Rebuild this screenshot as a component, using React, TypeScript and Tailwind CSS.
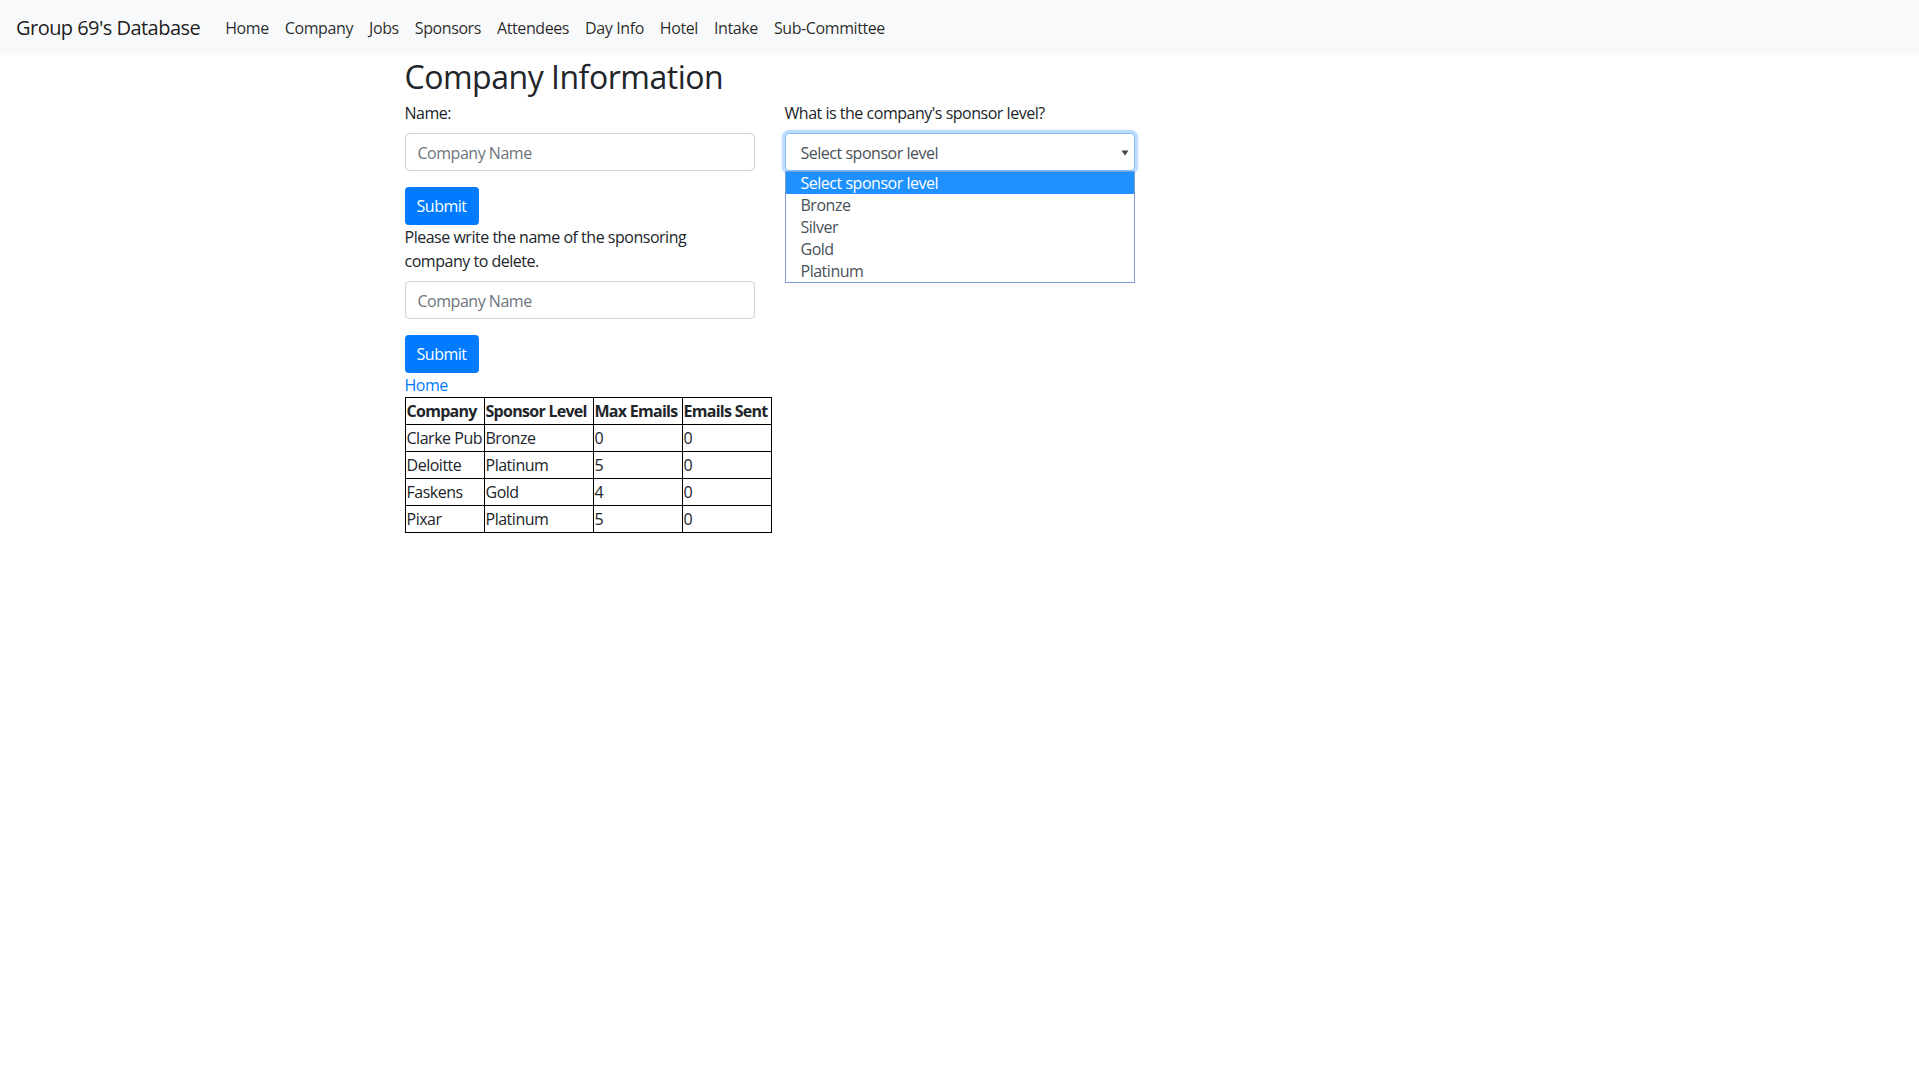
import React from 'react'

const navLinks = ['Home', 'Company', 'Jobs', 'Sponsors', 'Attendees', 'Day Info', 'Hotel', 'Intake', 'Sub-Committee']

const levels = ['Select sponsor level', 'Bronze', 'Silver', 'Gold', 'Platinum']

const companies = [
  { name: 'Clarke Pub', level: 'Bronze', max: 0, sent: 0 },
  { name: 'Deloitte', level: 'Platinum', max: 5, sent: 0 },
  { name: 'Faskens', level: 'Gold', max: 4, sent: 0 },
  { name: 'Pixar', level: 'Platinum', max: 5, sent: 0 },
]

function TextInput() {
  return (
    <input
      type="text"
      placeholder="Company Name"
      className="block h-[38px] w-full rounded-[4px] border border-[#ced4da] bg-white px-3 pt-px text-[16px] text-[#495057] outline-none placeholder:text-[#6c757d]"
    />
  )
}

function SubmitButton() {
  return (
    <button className="h-[38px] rounded-[4px] bg-[#007bff] px-3 text-[16px] text-white">
      Submit
    </button>
  )
}

export default function App() {
  return (
    <div className="min-h-screen bg-white font-['Open_Sans',sans-serif] text-[16px] leading-6 tracking-[-0.03em] text-[#212529]">
      {/* navbar */}
      <nav className="flex h-[55px] items-center bg-[#f8f9fa] px-4">
        <span className="mr-[17px] text-[20px] font-medium tracking-[-0.027em] text-black/90">Group 69's Database</span>
        <div className="flex tracking-[-0.025em]">
          {navLinks.map((l) => (
            <a key={l} href="#" className="px-2 text-black/85">
              {l}
            </a>
          ))}
        </div>
      </nav>

      <div className="mx-auto w-[1140px] px-[15px]">
        <h2 className="mt-[3px] mb-[5px] text-[32px] leading-[1.2] font-medium">Company Information</h2>

        <div className="grid grid-cols-3 gap-x-[30px]">
          {/* add / delete */}
          <div>
            <label className="mb-2 block">Name:</label>
            <div className="mb-4">
              <TextInput />
            </div>
            <SubmitButton />
            <label className="mb-2 block">
              Please write the name of the sponsoring
              <br />
              company to delete.
            </label>
            <div className="mb-4">
              <TextInput />
            </div>
            <SubmitButton />
          </div>

          {/* sponsor level */}
          <div>
            <label className="mb-2 block">What is the company's sponsor level?</label>
            <div className="relative">
              <div className="flex h-[38px] items-center justify-between rounded-[4px] border border-[#80bdff] bg-white pt-px pr-[5px] pl-[15px] text-[#495057] shadow-[0_0_0_0.2rem_rgba(0,123,255,0.25)]">
                <span>Select sponsor level</span>
                <svg width="8" height="6" viewBox="0 0 8 6">
                  <path d="M0.5 0.5 H7.5 L4 5.5 Z" fill="#444" />
                </svg>
              </div>
              <ul className="absolute top-[38px] right-0 left-0 z-10 border border-[#7a9cd3] bg-white">
                {levels.map((lv, i) => (
                  <li
                    key={lv}
                    className={
                      i === 0
                        ? 'h-[22px] bg-[#1e90ff] pl-[15px] leading-[22px] text-white'
                        : 'h-[22px] pl-[15px] leading-[22px] text-[#495057]'
                    }
                  >
                    {lv}
                  </li>
                ))}
              </ul>
            </div>
          </div>
        </div>

        <a href="#" className="block text-[#007bff]">
          Home
        </a>

        <table className="border-collapse border border-black">
          <thead>
            <tr>
              <th className="w-[79px] border border-black p-px text-left tracking-[-0.045em] whitespace-nowrap">Company</th>
              <th className="w-[109px] border border-black p-px text-left tracking-[-0.045em] whitespace-nowrap">Sponsor Level</th>
              <th className="w-[89px] border border-black p-px text-left tracking-[-0.045em] whitespace-nowrap">Max Emails</th>
              <th className="w-[89px] border border-black p-px text-left tracking-[-0.045em] whitespace-nowrap">Emails Sent</th>
            </tr>
          </thead>
          <tbody>
            {companies.map((c) => (
              <tr key={c.name}>
                <td className="border border-black p-px whitespace-nowrap">{c.name}</td>
                <td className="border border-black p-px whitespace-nowrap">{c.level}</td>
                <td className="border border-black p-px">{c.max}</td>
                <td className="border border-black p-px">{c.sent}</td>
              </tr>
            ))}
          </tbody>
        </table>
      </div>
    </div>
  )
}
